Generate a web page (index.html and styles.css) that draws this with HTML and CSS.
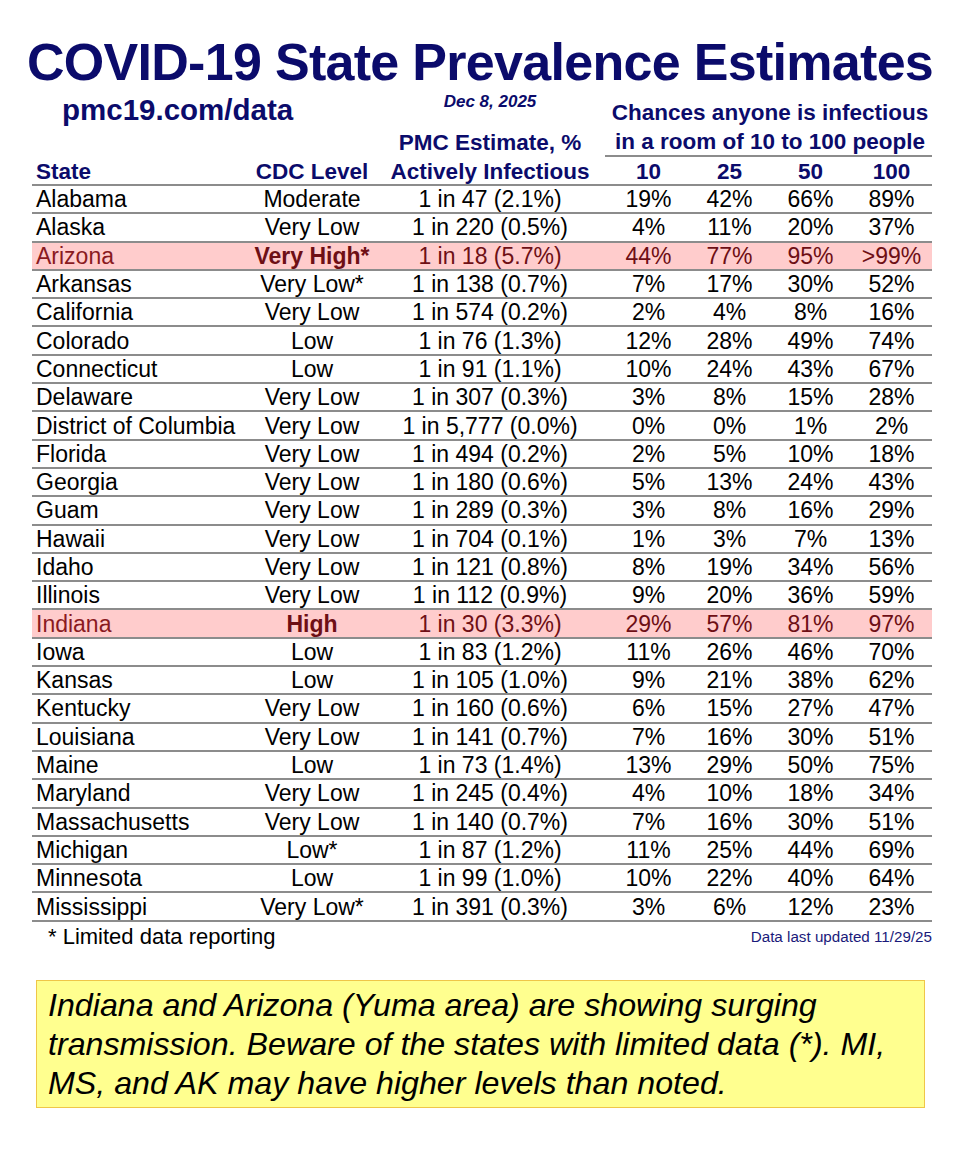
FILE: index.html
```html
<!DOCTYPE html>
<html lang="en">
<head>
<meta charset="utf-8">
<title>COVID-19 State Prevalence Estimates</title>
<link rel="stylesheet" href="styles.css">
</head>
<body>
<div class="page">
  <h1 class="title">COVID-19 State Prevalence Estimates</h1>
  <div class="table">
    <div class="head">
      <div class="site">pmc19.com/data</div>
      <div class="date">Dec 8, 2025</div>
      <div class="chances">Chances anyone is infectious</div>
      <div class="pmc">PMC Estimate, %</div>
      <div class="room">in a room of 10 to 100 people</div>
      <div class="lab left">State</div>
      <div class="lab">CDC Level</div>
      <div class="lab">Actively Infectious</div>
      <div class="lab">10</div>
      <div class="lab">25</div>
      <div class="lab">50</div>
      <div class="lab">100</div>
    </div>
    <div class="rows">
      <div class="row"><span class="st">Alabama</span><span>Moderate</span><span>1 in 47 (2.1%)</span><span>19%</span><span>42%</span><span>66%</span><span>89%</span></div>
      <div class="row"><span class="st">Alaska</span><span>Very Low</span><span>1 in 220 (0.5%)</span><span>4%</span><span>11%</span><span>20%</span><span>37%</span></div>
      <div class="row hl"><span class="st">Arizona</span><span class="lv">Very High*</span><span>1 in 18 (5.7%)</span><span>44%</span><span>77%</span><span>95%</span><span>&gt;99%</span></div>
      <div class="row"><span class="st">Arkansas</span><span>Very Low*</span><span>1 in 138 (0.7%)</span><span>7%</span><span>17%</span><span>30%</span><span>52%</span></div>
      <div class="row"><span class="st">California</span><span>Very Low</span><span>1 in 574 (0.2%)</span><span>2%</span><span>4%</span><span>8%</span><span>16%</span></div>
      <div class="row"><span class="st">Colorado</span><span>Low</span><span>1 in 76 (1.3%)</span><span>12%</span><span>28%</span><span>49%</span><span>74%</span></div>
      <div class="row"><span class="st">Connecticut</span><span>Low</span><span>1 in 91 (1.1%)</span><span>10%</span><span>24%</span><span>43%</span><span>67%</span></div>
      <div class="row"><span class="st">Delaware</span><span>Very Low</span><span>1 in 307 (0.3%)</span><span>3%</span><span>8%</span><span>15%</span><span>28%</span></div>
      <div class="row"><span class="st">District of Columbia</span><span>Very Low</span><span>1 in 5,777 (0.0%)</span><span>0%</span><span>0%</span><span>1%</span><span>2%</span></div>
      <div class="row"><span class="st">Florida</span><span>Very Low</span><span>1 in 494 (0.2%)</span><span>2%</span><span>5%</span><span>10%</span><span>18%</span></div>
      <div class="row"><span class="st">Georgia</span><span>Very Low</span><span>1 in 180 (0.6%)</span><span>5%</span><span>13%</span><span>24%</span><span>43%</span></div>
      <div class="row"><span class="st">Guam</span><span>Very Low</span><span>1 in 289 (0.3%)</span><span>3%</span><span>8%</span><span>16%</span><span>29%</span></div>
      <div class="row"><span class="st">Hawaii</span><span>Very Low</span><span>1 in 704 (0.1%)</span><span>1%</span><span>3%</span><span>7%</span><span>13%</span></div>
      <div class="row"><span class="st">Idaho</span><span>Very Low</span><span>1 in 121 (0.8%)</span><span>8%</span><span>19%</span><span>34%</span><span>56%</span></div>
      <div class="row"><span class="st">Illinois</span><span>Very Low</span><span>1 in 112 (0.9%)</span><span>9%</span><span>20%</span><span>36%</span><span>59%</span></div>
      <div class="row hl"><span class="st">Indiana</span><span class="lv">High</span><span>1 in 30 (3.3%)</span><span>29%</span><span>57%</span><span>81%</span><span>97%</span></div>
      <div class="row"><span class="st">Iowa</span><span>Low</span><span>1 in 83 (1.2%)</span><span>11%</span><span>26%</span><span>46%</span><span>70%</span></div>
      <div class="row"><span class="st">Kansas</span><span>Low</span><span>1 in 105 (1.0%)</span><span>9%</span><span>21%</span><span>38%</span><span>62%</span></div>
      <div class="row"><span class="st">Kentucky</span><span>Very Low</span><span>1 in 160 (0.6%)</span><span>6%</span><span>15%</span><span>27%</span><span>47%</span></div>
      <div class="row"><span class="st">Louisiana</span><span>Very Low</span><span>1 in 141 (0.7%)</span><span>7%</span><span>16%</span><span>30%</span><span>51%</span></div>
      <div class="row"><span class="st">Maine</span><span>Low</span><span>1 in 73 (1.4%)</span><span>13%</span><span>29%</span><span>50%</span><span>75%</span></div>
      <div class="row"><span class="st">Maryland</span><span>Very Low</span><span>1 in 245 (0.4%)</span><span>4%</span><span>10%</span><span>18%</span><span>34%</span></div>
      <div class="row"><span class="st">Massachusetts</span><span>Very Low</span><span>1 in 140 (0.7%)</span><span>7%</span><span>16%</span><span>30%</span><span>51%</span></div>
      <div class="row"><span class="st">Michigan</span><span>Low*</span><span>1 in 87 (1.2%)</span><span>11%</span><span>25%</span><span>44%</span><span>69%</span></div>
      <div class="row"><span class="st">Minnesota</span><span>Low</span><span>1 in 99 (1.0%)</span><span>10%</span><span>22%</span><span>40%</span><span>64%</span></div>
      <div class="row"><span class="st">Mississippi</span><span>Very Low*</span><span>1 in 391 (0.3%)</span><span>3%</span><span>6%</span><span>12%</span><span>23%</span></div>
    </div>
    <div class="foot">
      <span class="note">* Limited data reporting</span>
      <span class="updated">Data last updated 11/29/25</span>
    </div>
  </div>
  <div class="callout">Indiana and Arizona (Yuma area) are showing surging transmission. Beware of the states with limited data (*). MI, MS, and AK may have higher levels than noted.</div>
</div>
</body>
</html>
```

FILE: styles.css
```css
html, body {
  margin: 0;
  padding: 0;
  background: #ffffff;
}

body {
  font-family: "Liberation Sans", Arial, sans-serif;
  color: #000000;
}

.page {
  width: 960px;
  padding-top: 32px;
}

.title {
  margin: 0;
  font-size: 52px;
  line-height: 60px;
  font-weight: 700;
  letter-spacing: -0.7px;
  color: #0b0b6b;
  text-align: center;
  white-space: nowrap;
}

.table {
  margin-left: 32px;
  width: 900px;
}

.head,
.row {
  display: grid;
  grid-template-columns: 220px 120px 236px repeat(4, 81px);
}

.head {
  grid-template-rows: 36px 29px 29px;
  color: #0b0b6b;
  font-weight: 700;
  font-size: 22.5px;
}

.site {
  grid-column: 1 / 3;
  grid-row: 1;
  align-self: start;
  margin-top: 6px;
  padding-left: 30px;
  font-size: 29.5px;
  line-height: 24px;
}

.date {
  grid-column: 3;
  grid-row: 1;
  align-self: start;
  margin-top: 1px;
  text-align: center;
  font-style: italic;
  font-size: 17px;
  line-height: 18px;
}

.chances {
  grid-column: 4 / 8;
  grid-row: 1;
  align-self: end;
  line-height: 30px;
  text-align: center;
  white-space: nowrap;
}

.pmc {
  grid-column: 3;
  grid-row: 2;
  text-align: center;
  line-height: 29px;
}

.room {
  grid-column: 4 / 8;
  grid-row: 2;
  margin-left: -3px;
  padding-left: 3px;
  text-align: center;
  line-height: 27px;
  border-bottom: 2px solid #8c8c8c;
  white-space: nowrap;
}

.lab {
  grid-row: 3;
  text-align: center;
  line-height: 27px;
  padding-top: 1px;
  border-bottom: 2px solid #8c8c8c;
  white-space: nowrap;
}

.lab.left {
  text-align: left;
  padding-left: 4px;
}

.row {
  height: 28.3px;
  box-sizing: border-box;
  border-bottom: 2px solid #8c8c8c;
  align-items: center;
  font-size: 23px;
  line-height: 26px;
}

.row span {
  text-align: center;
  white-space: nowrap;
}

.row span.st {
  text-align: left;
  padding-left: 4px;
}

.row.hl {
  background: #ffcccc;
  color: #6e0f15;
}

.row.hl .st {
  color: #8a1a1f;
}

.row .lv {
  font-weight: 700;
}

.foot {
  display: flex;
  justify-content: space-between;
  align-items: center;
  height: 30px;
}

.note {
  padding-left: 16px;
  font-size: 22px;
}

.updated {
  font-size: 15.2px;
  color: #1a1a7a;
}

.callout {
  margin: 28px 0 0 36px;
  width: 889px;
  box-sizing: border-box;
  padding: 5px 10px 4px 11px;
  background: #ffff8f;
  border: 1px solid #efc648;
  font-style: italic;
  font-size: 32.2px;
  line-height: 39px;
}
```
